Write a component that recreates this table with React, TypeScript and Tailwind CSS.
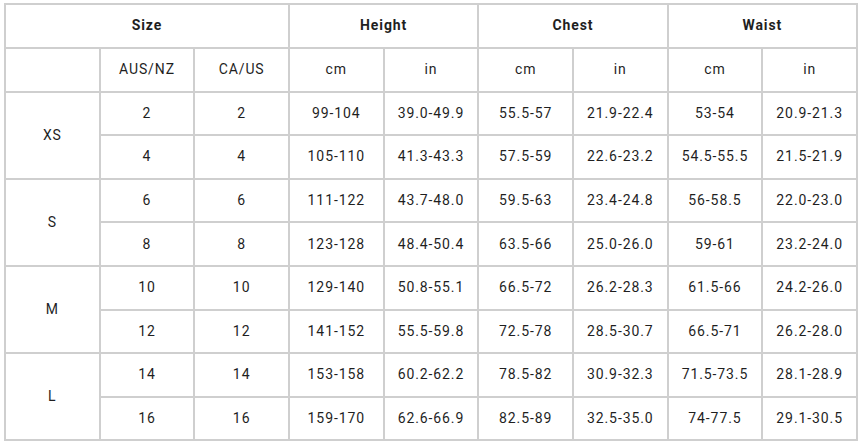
const ROWS = [
  { size: 'XS', vals: [['2', '2', '99-104', '39.0-49.9', '55.5-57', '21.9-22.4', '53-54', '20.9-21.3'], ['4', '4', '105-110', '41.3-43.3', '57.5-59', '22.6-23.2', '54.5-55.5', '21.5-21.9']] },
  { size: 'S', vals: [['6', '6', '111-122', '43.7-48.0', '59.5-63', '23.4-24.8', '56-58.5', '22.0-23.0'], ['8', '8', '123-128', '48.4-50.4', '63.5-66', '25.0-26.0', '59-61', '23.2-24.0']] },
  { size: 'M', vals: [['10', '10', '129-140', '50.8-55.1', '66.5-72', '26.2-28.3', '61.5-66', '24.2-26.0'], ['12', '12', '141-152', '55.5-59.8', '72.5-78', '28.5-30.7', '66.5-71', '26.2-28.0']] },
  { size: 'L', vals: [['14', '14', '153-158', '60.2-62.2', '78.5-82', '30.9-32.3', '71.5-73.5', '28.1-28.9'], ['16', '16', '159-170', '62.6-66.9', '82.5-89', '32.5-35.0', '74-77.5', '29.1-30.5']] },
] as const

const cell = 'border-2 border-[#cfcfcf] text-center align-middle p-0'

export default function App() {
  return (
    <div className="bg-white w-[861px] h-[443px] pt-[3px] pl-[4px] font-['Roboto',sans-serif] text-[14px] tracking-[0.9px] text-[#1f1f1f]">
      <table className="w-[854px] table-fixed border-collapse">
        <tbody>
          <tr className="h-[44px]">
            <th colSpan={3} className={`${cell} font-bold pb-[2px]`}>Size</th>
            <th colSpan={2} className={`${cell} font-bold pb-[2px]`}>Height</th>
            <th colSpan={2} className={`${cell} font-bold pb-[2px]`}>Chest</th>
            <th colSpan={2} className={`${cell} font-bold pb-[2px]`}>Waist</th>
          </tr>
          <tr className="h-[43.6px]">
            <td className={cell}></td>
            <td className={cell}>AUS/NZ</td>
            <td className={cell}>CA/US</td>
            <td className={cell}>cm</td>
            <td className={cell}>in</td>
            <td className={cell}>cm</td>
            <td className={cell}>in</td>
            <td className={cell}>cm</td>
            <td className={cell}>in</td>
          </tr>
          {ROWS.flatMap((group) =>
            group.vals.map((vals, i) => (
              <tr key={group.size + i} className="h-[43.6px]">
                {i === 0 && (
                  <td rowSpan={2} className={cell}>
                    {group.size}
                  </td>
                )}
                {vals.map((v, j) => (
                  <td key={j} className={cell}>
                    {v}
                  </td>
                ))}
              </tr>
            ))
          )}
        </tbody>
      </table>
    </div>
  )
}
